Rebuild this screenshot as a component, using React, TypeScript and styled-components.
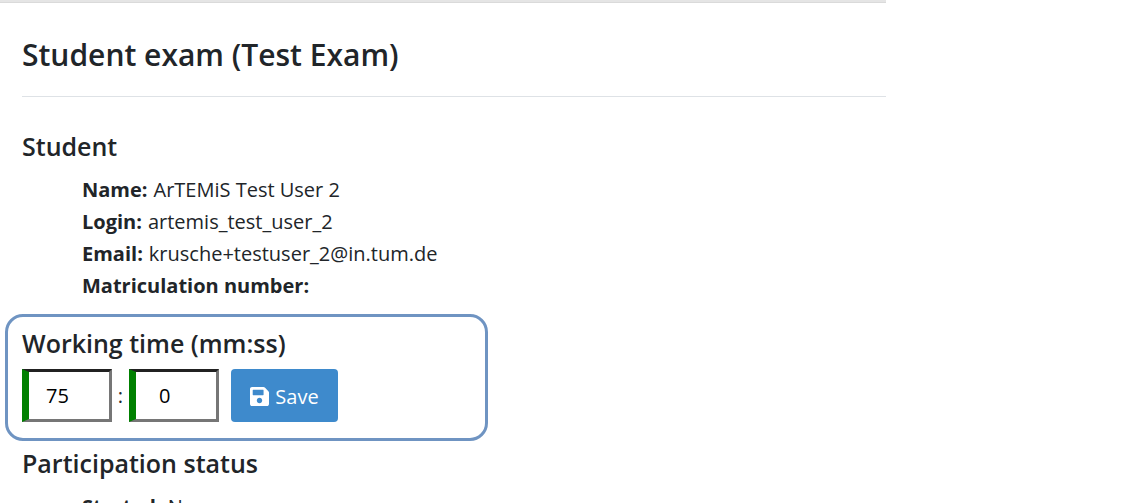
import React from 'react';
import styled, { createGlobalStyle } from 'styled-components';

const GlobalStyle = createGlobalStyle`
  * { box-sizing: border-box; }
  html, body { height: 100%; }
  body {
    margin: 0;
    overflow: hidden;
    background: #fff;
    color: #212529;
    font-family: 'Segoe UI', 'Open Sans', 'Noto Sans', sans-serif;
    font-size: 20px;
    line-height: 32px;
  }
`;

const Page = styled.main`
  margin-right: 256px;
  border-top: 2px solid #e5e5e5;
`;

const Card = styled.div`
  border-top: 1px solid #dadada;
  padding: 33px 0 0 22px;
`;

const Title = styled.h1`
  margin: 0;
  padding-bottom: 22px;
  border-bottom: 1px solid #dee2e6;
  font-size: 30px;
  line-height: 38px;
  font-weight: 600;
`;

const Section = styled.section<{ $top: number }>`
  margin-top: ${(p) => p.$top}px;
`;

const Heading = styled.h2`
  margin: 0 0 10px;
  font-size: 25px;
  line-height: 32px;
  font-weight: 600;
`;

const Details = styled.dl`
  margin: 0;
  padding: 2px 0 0 60px;
`;

const Detail = styled.div`
  display: flex;
  gap: 6px;
  height: 32px;
`;

const Term = styled.dt`
  font-weight: 700;
`;

const Value = styled.dd`
  margin: 0;
`;

const Highlight = styled.section`
  max-width: 483px;
  margin: 12px 0 0 -17px;
  padding: 10px 14px 16px;
  border: 3px solid #6f94c2;
  border-radius: 18px;
`;

const TimeForm = styled.form`
  display: flex;
  align-items: center;
`;

const TimeInput = styled.input<{ $indent: number }>`
  width: 90px;
  height: 53px;
  padding: 0 0 0 ${(p) => p.$indent}px;
  border-style: solid;
  border-width: 3px 3px 3px 7px;
  border-color: #212121 #767676 #767676 #008000;
  background: #fff;
  color: #000;
  font: inherit;
  outline: none;
`;

const Separator = styled.span`
  width: 17px;
  text-align: center;
`;

const SaveButton = styled.button`
  display: flex;
  align-items: center;
  justify-content: center;
  gap: 6px;
  width: 107px;
  height: 53px;
  margin-left: 12px;
  padding: 2px 0 0;
  border: 0;
  border-radius: 4px;
  background: #3e8acc;
  color: #fff;
  font: inherit;
`;

const SaveIcon = () => (
  <svg width="19" height="19" viewBox="0 32 448 448" fill="currentColor" aria-hidden="true">
    <path d="M433.941 129.941l-83.882-83.882A48 48 0 0 0 316.118 32H48C21.49 32 0 53.49 0 80v352c0 26.51 21.49 48 48 48h352c26.51 0 48-21.49 48-48V163.882a48 48 0 0 0-14.059-33.941zM224 416c-35.346 0-64-28.654-64-64 0-35.346 28.654-64 64-64s64 28.654 64 64c0 35.346-28.654 64-64 64zm96-304.52V212c0 6.627-5.373 12-12 12H76c-6.627 0-12-5.373-12-12V108c0-6.627 5.373-12 12-12h228.52c3.183 0 6.235 1.264 8.485 3.515l3.48 3.48A11.996 11.996 0 0 1 320 111.48z" />
  </svg>
);

const student = [
  ['Name:', 'ArTEMiS Test User 2'],
  ['Login:', 'artemis_test_user_2'],
  ['Email:', 'krusche+testuser_2@in.tum.de'],
  ['Matriculation number:', ''],
];

const participation = [['Started:', 'No']];

const DetailList = ({ items }: { items: string[][] }) => (
  <Details>
    {items.map(([term, value]) => (
      <Detail key={term}>
        <Term>{term}</Term>
        <Value>{value}</Value>
      </Detail>
    ))}
  </Details>
);

export default function App() {
  return (
    <>
      <GlobalStyle />
      <Page>
        <Card>
          <Title>Student exam (Test Exam)</Title>
          <Section $top={33}>
            <Heading>Student</Heading>
            <DetailList items={student} />
          </Section>
          <Highlight>
            <Heading>Working time (mm:ss)</Heading>
            <TimeForm onSubmit={(e) => e.preventDefault()}>
              <TimeInput $indent={17} type="text" inputMode="numeric" aria-label="Minutes" defaultValue="75" />
              <Separator>:</Separator>
              <TimeInput $indent={23} type="text" inputMode="numeric" aria-label="Seconds" defaultValue="0" />
              <SaveButton type="submit">
                <SaveIcon />
                Save
              </SaveButton>
            </TimeForm>
          </Highlight>
          <Section $top={6}>
            <Heading>Participation status</Heading>
            <DetailList items={participation} />
          </Section>
        </Card>
      </Page>
    </>
  );
}
